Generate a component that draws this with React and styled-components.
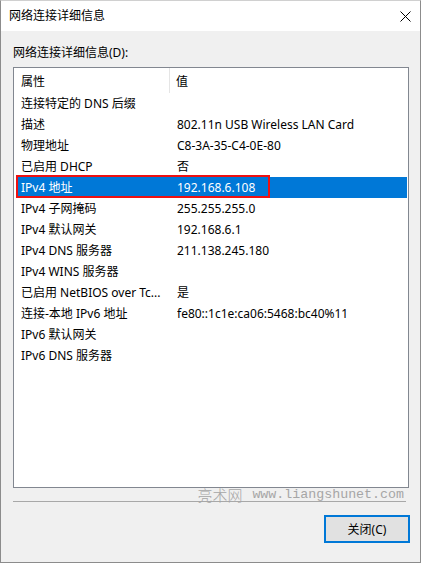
import React from "react";
import styled, { createGlobalStyle } from "styled-components";

const GlobalStyle = createGlobalStyle`
  html, body {
    margin: 0;
    padding: 0;
    overflow: hidden;
    background: #ffffff;
  }
  * {
    box-sizing: border-box;
  }
`;

const UI_FONT = `"Segoe UI", "Noto Sans", "Noto Sans CJK SC", sans-serif`;

const Frame = styled.div`
  width: 421px;
  height: 563px;
  display: flex;
  flex-direction: column;
  border: 1px solid #8c8c8c;
  border-top-color: #d0d0d0;
  font-family: ${UI_FONT};
  font-size: 12px;
  color: #000;
`;

const TitleBar = styled.div`
  height: 30px;
  flex: none;
  display: flex;
  align-items: center;
  justify-content: space-between;
  padding: 0 9px 0 8px;
  background: #ffffff;
`;

const Title = styled.span`
  line-height: 16px;
`;

const CloseIcon = styled.svg`
  width: 11px;
  height: 11px;
  display: block;
`;

const Body = styled.div`
  flex: 1;
  display: flex;
  flex-direction: column;
  background: #f0f0f0;
  padding: 0 11px 0 12px;
`;

const Label = styled.div`
  margin-top: 14px;
  margin-bottom: 6px;
  line-height: 16px;
  height: 16px;
`;

const ListBox = styled.div`
  height: 421px;
  flex: none;
  display: flex;
  flex-direction: column;
  background: #ffffff;
  border: 1px solid #828790;
`;

const Header = styled.div`
  height: 25px;
  flex: none;
  display: grid;
  grid-template-columns: 156px 1fr;
`;

const HeaderCell = styled.div`
  display: flex;
  align-items: center;
  padding-left: ${(p) => p.$pad}px;
  border-right: ${(p) => (p.$divider ? "1px solid #e5e5e5" : "none")};
`;

const Rows = styled.div`
  display: flex;
  flex-direction: column;
  padding: 0 1px 0 4px;
`;

const Row = styled.div`
  position: relative;
  height: 21px;
  display: grid;
  grid-template-columns: 159px 1fr;
  align-items: center;
  background: ${(p) => (p.$selected ? "#0078d7" : "transparent")};
  color: ${(p) => (p.$selected ? "#ffffff" : "#000000")};
`;

const Cell = styled.span`
  padding-left: ${(p) => p.$pad}px;
  white-space: nowrap;
  overflow: hidden;
  line-height: 16px;
`;

const Highlight = styled.div`
  position: absolute;
  left: -2px;
  top: -2px;
  width: 254px;
  height: 23px;
  border: 2px solid #ee1111;
  pointer-events: none;
`;

const WatermarkBar = styled.div`
  height: 14px;
  margin-right: 3px;
  display: flex;
  align-items: center;
  justify-content: flex-end;
  padding-right: 2px;
  border-bottom: 1px solid #a8a8a8;
  color: #a6a6a6;
  white-space: nowrap;
`;

const MarkCjk = styled.span`
  font-family: "Noto Sans CJK SC", sans-serif;
  font-weight: 300;
  font-size: 15px;
  line-height: 14px;
  margin-right: 10px;
`;

const MarkUrl = styled.span`
  font-family: "Liberation Mono", "DejaVu Sans Mono", monospace;
  font-size: 13.3px;
  line-height: 14px;
`;

const ButtonRow = styled.div`
  margin-top: 13px;
  margin-right: -1px;
  display: flex;
  justify-content: flex-end;
`;

const Button = styled.button`
  width: 86px;
  height: 28px;
  padding: 0;
  background: #e1e1e1;
  border: 2px solid #0078d7;
  font-family: ${UI_FONT};
  font-size: 12px;
  color: #000;
`;

const rows = [
  ["连接特定的 DNS 后缀", ""],
  ["描述", "802.11n USB Wireless LAN Card"],
  ["物理地址", "C8-3A-35-C4-0E-80"],
  ["已启用 DHCP", "否"],
  ["IPv4 地址", "192.168.6.108", true],
  ["IPv4 子网掩码", "255.255.255.0"],
  ["IPv4 默认网关", "192.168.6.1"],
  ["IPv4 DNS 服务器", "211.138.245.180"],
  ["IPv4 WINS 服务器", ""],
  ["已启用 NetBIOS over Tc...", "是"],
  ["连接-本地 IPv6 地址", "fe80::1c1e:ca06:5468:bc40%11"],
  ["IPv6 默认网关", ""],
  ["IPv6 DNS 服务器", ""],
];

export default function App() {
  return (
    <>
      <GlobalStyle />
      <Frame>
        <TitleBar>
          <Title>网络连接详细信息</Title>
          <CloseIcon viewBox="0 0 11 11">
            <path d="M0.5 0.5 L10.5 10.5 M10.5 0.5 L0.5 10.5" stroke="#000" strokeWidth="1" fill="none" />
          </CloseIcon>
        </TitleBar>
        <Body>
          <Label>网络连接详细信息(D):</Label>
          <ListBox>
            <Header>
              <HeaderCell $pad={7} $divider>属性</HeaderCell>
              <HeaderCell $pad={6}>值</HeaderCell>
            </Header>
            <Rows>
              {rows.map(([name, value, selected]) => (
                <Row key={name} $selected={selected}>
                  <Cell $pad={3}>{name}</Cell>
                  <Cell $pad={0}>{value}</Cell>
                  {selected && <Highlight />}
                </Row>
              ))}
            </Rows>
          </ListBox>
          <WatermarkBar>
            <MarkCjk>亮术网</MarkCjk>
            <MarkUrl>www.liangshunet.com</MarkUrl>
          </WatermarkBar>
          <ButtonRow>
            <Button>关闭(C)</Button>
          </ButtonRow>
        </Body>
      </Frame>
    </>
  );
}
